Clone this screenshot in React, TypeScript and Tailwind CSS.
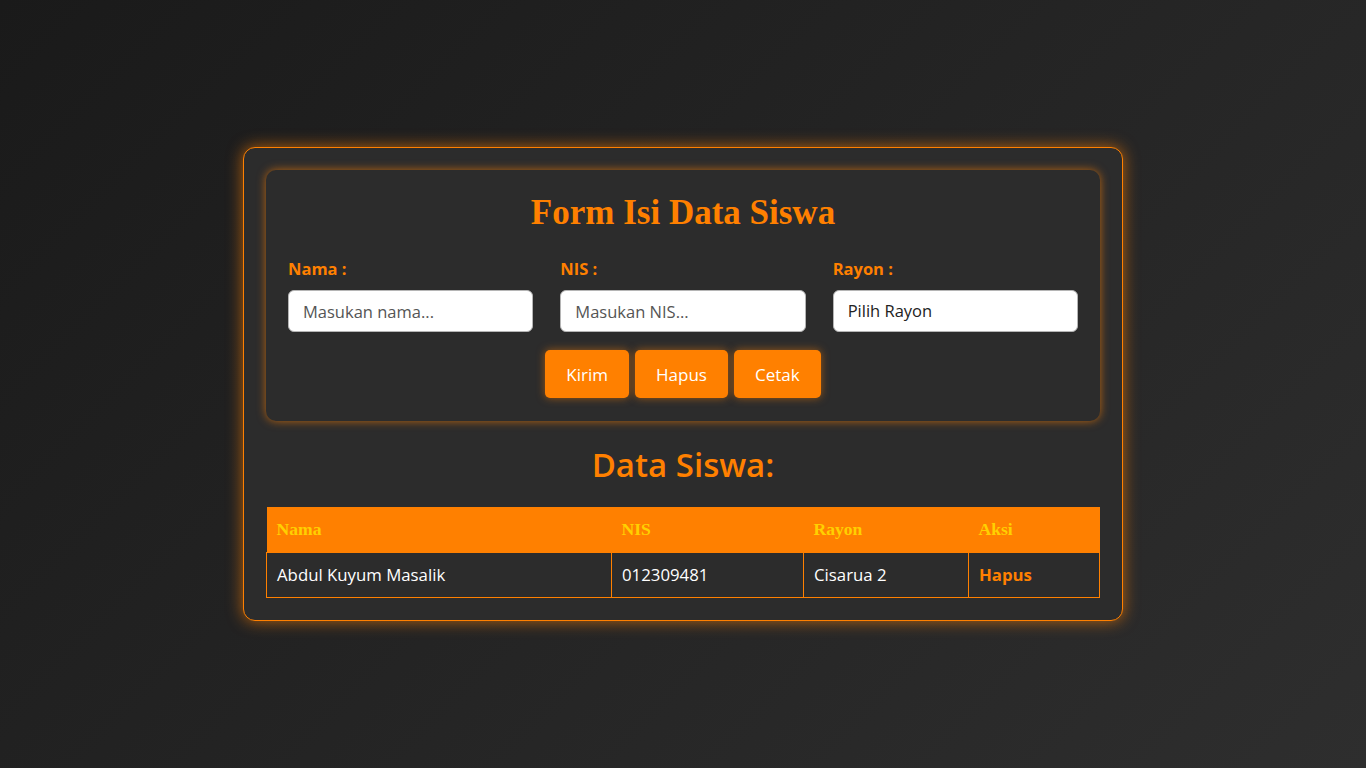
import React from "react";

const sans = "font-['Open_Sans','Noto_Sans',sans-serif]";

export default function App() {
  return (
    <div className={`min-h-screen w-full bg-[linear-gradient(135deg,#1a1a1a,#2e2e2e)] flex items-center justify-center ${sans}`}>
      <div className="w-[880px] rounded-[12px] border border-[#ff8000] bg-[#2c2c2c] p-[22px] shadow-[0_0_16px_#ff8000aa]">
        <div className="rounded-[10px] bg-[#2c2c2c] px-[22px] pt-[21px] pb-[23px] shadow-[0_0_10px_#ff8000aa]">
          <h1 className="text-center font-['Liberation_Serif',serif] text-[35px] font-bold leading-[44px] text-[#ff8000]">
            Form Isi Data Siswa
          </h1>
          <div className="mt-[24px] grid grid-cols-3 gap-x-[27px]">
            {[
              { label: "Nama :", ph: "Masukan nama..." },
              { label: "NIS :", ph: "Masukan NIS..." },
            ].map((f) => (
              <div key={f.label}>
                <label className="block text-[16.5px] font-bold leading-[20px] text-[#ff8000]">{f.label}</label>
                <input
                  placeholder={f.ph}
                  className="mt-[11px] block h-[42px] w-full rounded-[6px] border border-[#b5b5b5] bg-white px-[14px] text-[16.5px] text-[#222] placeholder:text-[#555] outline-none"
                />
              </div>
            ))}
            <div>
              <label className="block text-[16.5px] font-bold leading-[20px] text-[#ff8000]">Rayon :</label>
              <div className="mt-[11px] flex h-[42px] w-full items-center rounded-[6px] border border-[#b5b5b5] bg-white px-[14px] text-[16.5px] text-[#222]">
                Pilih Rayon
              </div>
            </div>
          </div>
          <div className="mt-[18px] flex justify-center gap-[6px]">
            {["Kirim", "Hapus", "Cetak"].map((b) => (
              <button
                key={b}
                className="h-[48px] rounded-[5px] bg-[#ff8000] px-[21px] text-[17px] text-white shadow-[0_0_8px_#ff800088]"
              >
                {b}
              </button>
            ))}
          </div>
        </div>
        <h2 className="mt-[24px] text-center text-[33px] font-semibold leading-[40px] text-[#ff8000]">Data Siswa:</h2>
        <table className="mt-[22px] w-full border-collapse text-left">
          <thead>
            <tr className="h-[45px] bg-[#ff8000] font-['Liberation_Serif',serif] text-[17.6px] font-bold text-[#ffd000]">
              <th className="w-[345px] px-[10px]">Nama</th>
              <th className="w-[192px] px-[10px]">NIS</th>
              <th className="w-[165px] px-[10px]">Rayon</th>
              <th className="px-[10px]">Aksi</th>
            </tr>
          </thead>
          <tbody>
            <tr className="h-[45px] text-[16.8px] text-white">
              <td className="border border-[#ff8000] px-[10px]">Abdul Kuyum Masalik</td>
              <td className="border border-[#ff8000] px-[10px]">012309481</td>
              <td className="border border-[#ff8000] px-[10px]">Cisarua 2</td>
              <td className="border border-[#ff8000] px-[10px] font-bold text-[#ff8000]">Hapus</td>
            </tr>
          </tbody>
        </table>
      </div>
    </div>
  );
}
